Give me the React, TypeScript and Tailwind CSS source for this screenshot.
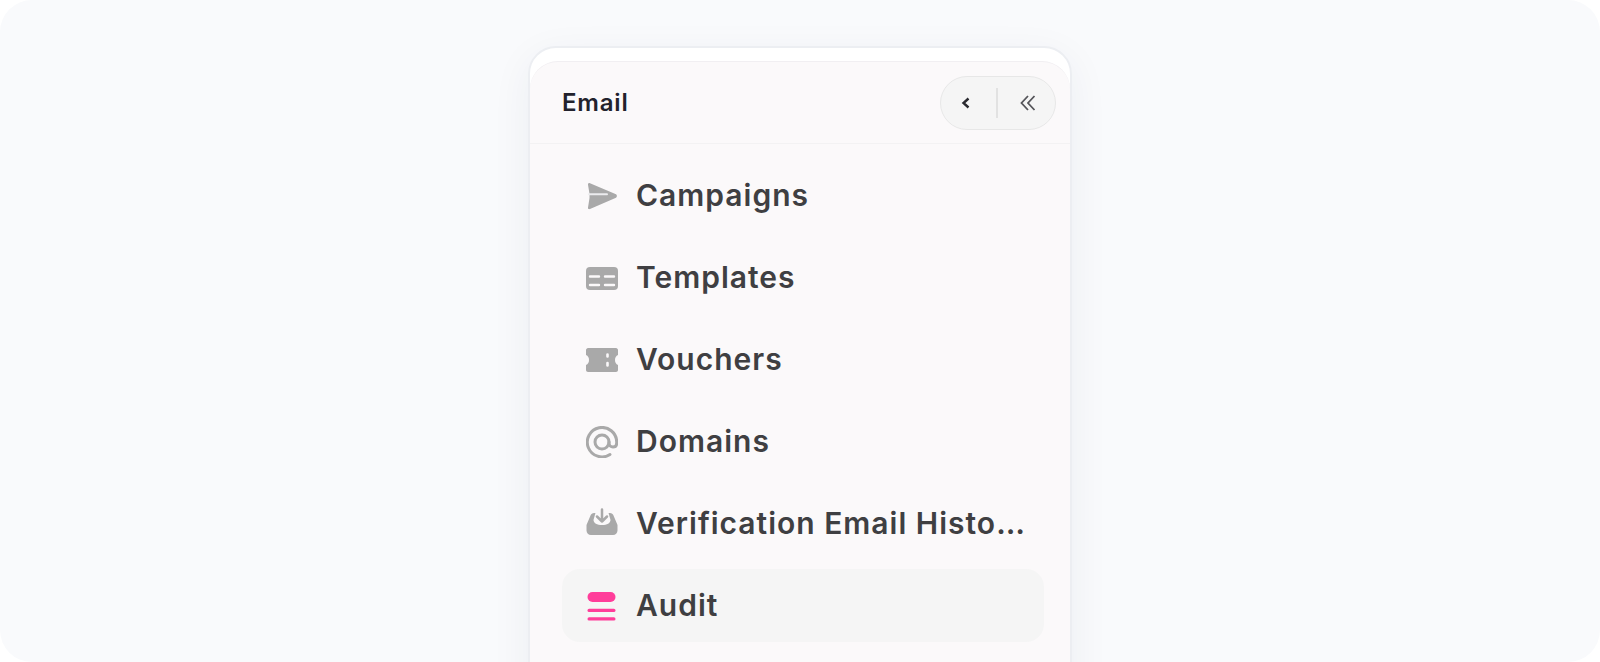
import React from 'react';

const IconSend = () => (
  <svg width="32" height="32" viewBox="0 0 32 32" fill="#a9a9a9">
    <path d="M4 3.200 30 14.300c1.200.6 1.200 2.800 0 3.400L4 29.100c-1.300.5-2.300-.3-2-1.600L3.500 18 3.500 14 2 4.800c-.4-1.200.8-2 2-1.600z" />
    <path d="M3 14.300H21" stroke="#ececee" strokeWidth="2" strokeLinecap="round" />
  </svg>
);

const IconTemplate = () => (
  <svg width="32" height="32" viewBox="0 0 32 32">
    <rect x="0" y="5" width="32" height="23" rx="4" fill="#a9a9a9" />
    <path d="M4 14.500H13M19 14.500H28M4 23H13M19 23H28" stroke="#fbf9fa" strokeWidth="2.400" strokeLinecap="round" />
  </svg>
);

const IconVoucher = () => (
  <svg width="32" height="32" viewBox="0 0 32 32">
    <path
      d="M2 4h28c1 0 2 1 2 2v5c-2 .7-3 2.700-3 5s1 4.300 3 5v5c0 1-1 2-2 2H2c-1 0-2-1-2-2v-5c2-.7 3-2.700 3-5s-1-4.300-3-5V6c0-1 1-2 2-2z"
      fill="#a9a9a9"
    />
    <path d="M21.500 10.500v2M21.500 19v2.500" stroke="#fbf9fa" strokeWidth="2.600" strokeLinecap="round" />
  </svg>
);

const IconAt = () => (
  <svg width="32" height="32" viewBox="0 0 32 32" fill="none" stroke="#a9a9a9" strokeWidth="3" strokeLinecap="round">
    <path d="M24 28.500A14.700 14.700 0 1 1 30.700 16v1c0 2.600-1.600 4-3.700 4s-4-1.400-4-4v-1" />
    <circle cx="16" cy="16" r="7" />
  </svg>
);

const IconInbox = () => (
  <svg width="32" height="32" viewBox="0 0 32 32">
    <path
      d="M8 5h16c1.500 0 3 1 3.500 2.500L31.500 17v5.500c0 2.500-2 4.500-4.500 4.500H5c-2.500 0-4.500-2-4.500-4.500V17l4-9.500C5 6 6.500 5 8 5z"
      fill="#a9a9a9"
    />
    <path d="M10 3h12l2.500 9c0 3-3.500 5-8.500 5s-8.500-2-8.500-5z" fill="#fbf9fa" />
    <path d="M16 1.500v12M11 8.500l5 5 5-5" fill="none" stroke="#a9a9a9" strokeWidth="2.500" strokeLinecap="round" strokeLinejoin="round" />
  </svg>
);

const IconAudit = () => (
  <svg width="32" height="32" viewBox="0 0 32 32" fill="#ff3d9a">
    <rect x="1.500" y="2" width="28" height="10" rx="5" />
    <rect x="1.500" y="18.700" width="28" height="3.300" rx="1.600" />
    <rect x="1.500" y="27.300" width="28" height="3.300" rx="1.600" />
  </svg>
);

const items = [
  { label: 'Campaigns', icon: <IconSend /> },
  { label: 'Templates', icon: <IconTemplate /> },
  { label: 'Vouchers', icon: <IconVoucher /> },
  { label: 'Domains', icon: <IconAt /> },
  { label: 'Verification Email History', icon: <IconInbox /> },
  { label: 'Audit', icon: <IconAudit />, active: true },
];

export default function App() {
  return (
    <div className="h-[662px] overflow-hidden bg-white font-['Inter',sans-serif]">
      <div className="flex h-full justify-center overflow-hidden rounded-[32px] bg-[#f9fafc] pt-[46px]">
        <div className="h-[700px] w-[544px] overflow-hidden rounded-t-[28px] border-2 border-[#eceef2] bg-white pt-[13px] shadow-[0_10px_40px_rgba(40,50,80,0.06)]">
          <div className="h-full rounded-t-[28px] border-t border-[#f1eff2] bg-[#fbf9fa]">
            <div className="flex h-[82px] items-center justify-between border-b border-[#f3f2f3] pl-[32px] pr-[14px]">
              <span className="text-[24px] font-semibold tracking-[0.8px] text-[#22222c]">Email</span>
              <div className="flex h-[54px] w-[116px] items-center rounded-full border border-[#e7e7e7] bg-[#f5f5f5]">
                <button className="flex w-[55px] justify-center pr-[5px]">
                  <svg width="12" height="14" viewBox="0 0 12 14" fill="none" stroke="#2a2a30" strokeWidth="2.400">
                    <path d="M8.500 2.500 3.500 7l5 4.500" />
                  </svg>
                </button>
                <div className="h-[30px] w-[2px] bg-[#e2e2e2]" />
                <button className="flex flex-1 justify-center pl-[3px]">
                  <svg width="18" height="18" viewBox="0 0 18 18" fill="none" stroke="#55555a" strokeWidth="1.800">
                    <path d="M9 2 2.500 9 9 16M15.500 2 9 9l6.500 7" />
                  </svg>
                </button>
              </div>
            </div>
            <nav className="flex flex-col gap-[9px] pl-[32px] pr-[26px] pt-[15px]">
              {items.map((item) => (
                <div
                  key={item.label}
                  className={`flex h-[73px] items-center gap-[18px] rounded-[18px] pl-[24px] pr-[19px] ${item.active ? 'bg-[#f5f5f5]' : ''}`}
                >
                  <span className="shrink-0">{item.icon}</span>
                  <span className="truncate text-[30px] font-semibold tracking-[1px] text-[#3f3f42]">{item.label}</span>
                </div>
              ))}
            </nav>
          </div>
        </div>
      </div>
    </div>
  );
}
